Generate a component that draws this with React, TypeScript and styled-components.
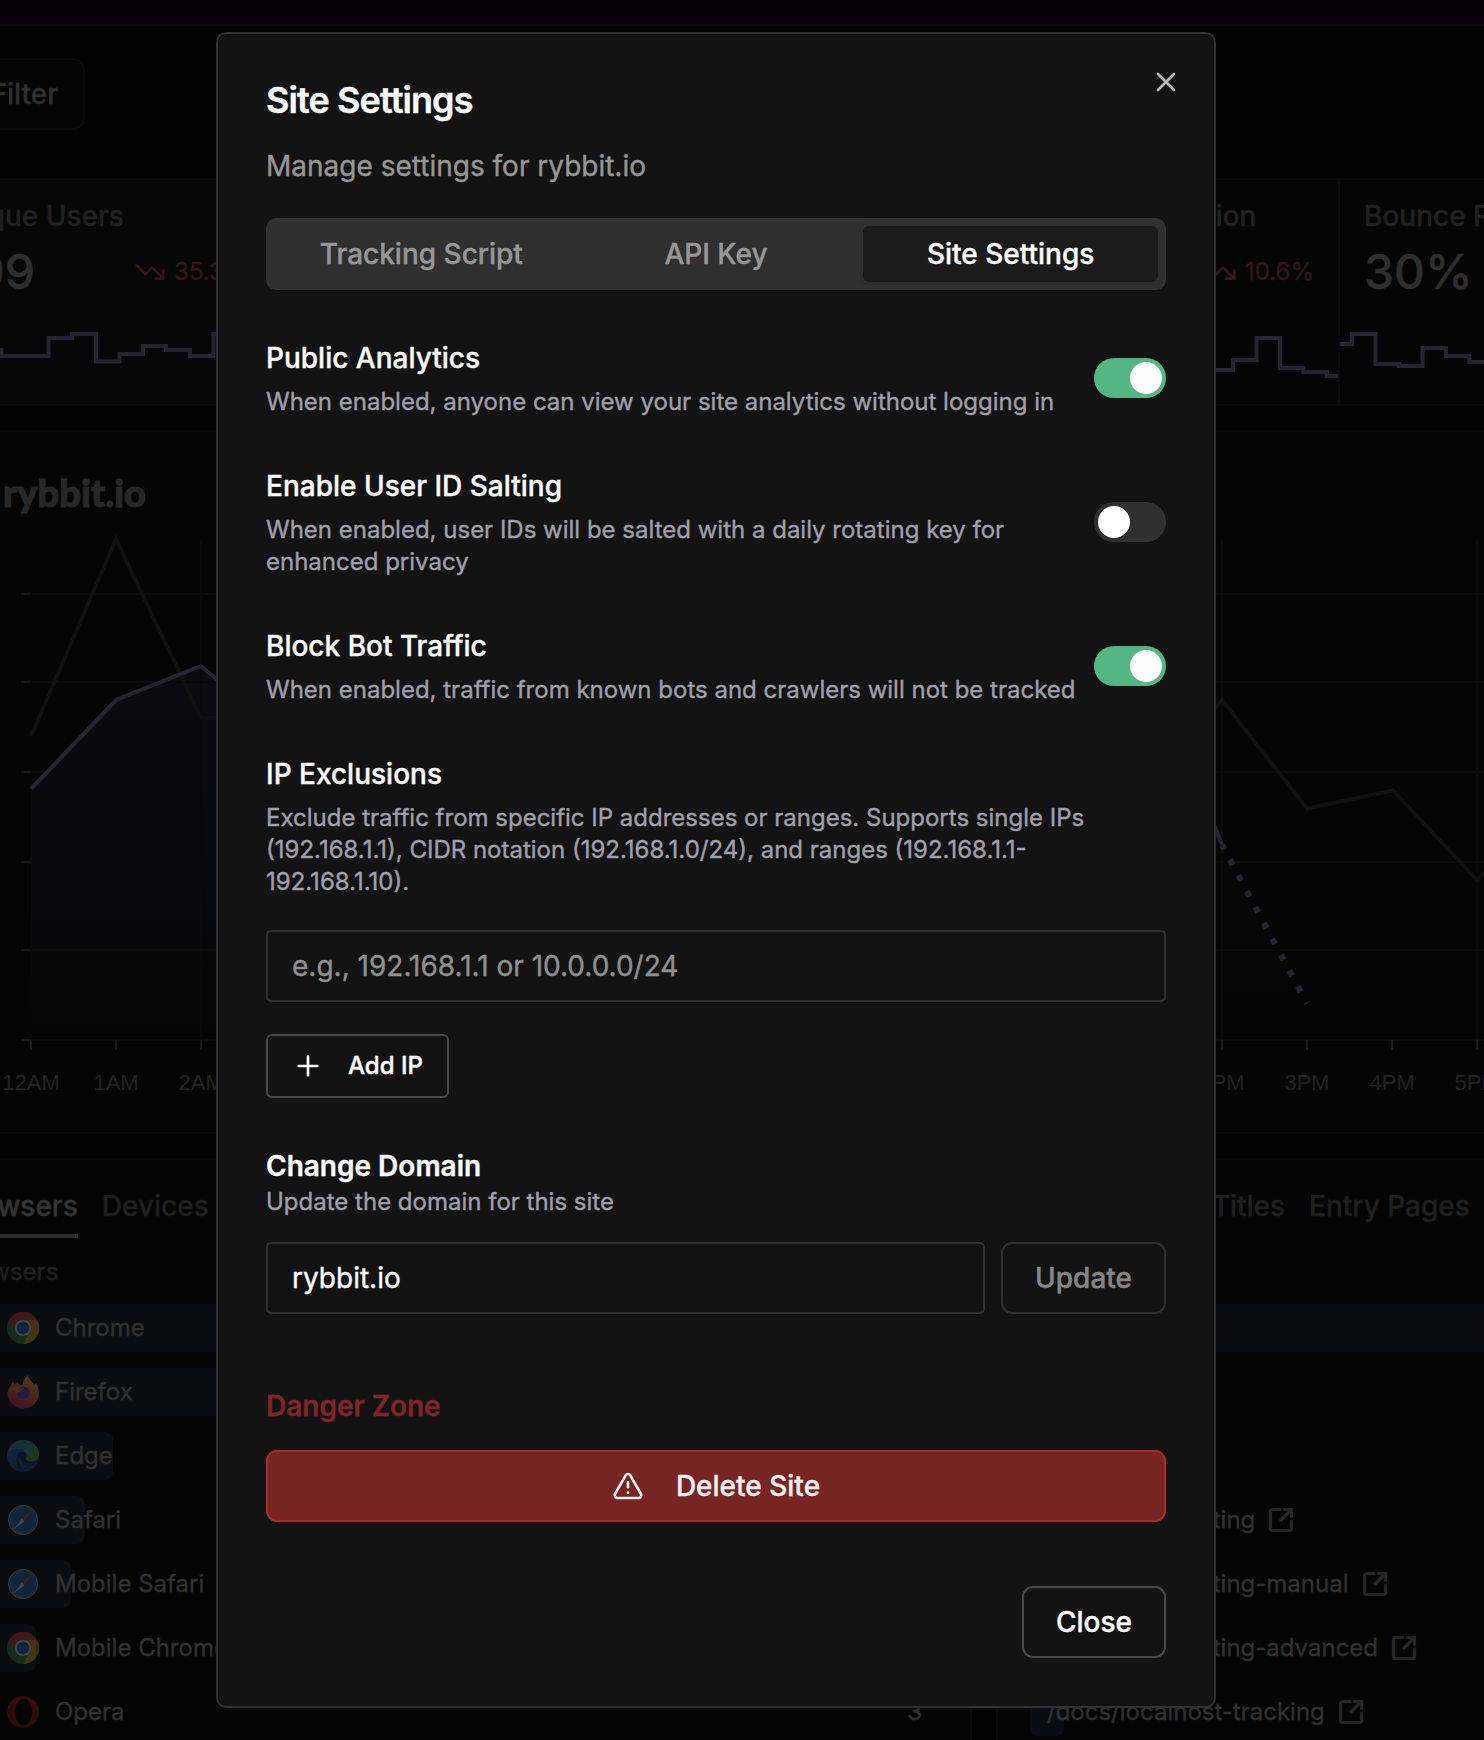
import React, { useState } from "react";
import styled, { createGlobalStyle, css } from "styled-components";
import { AlertTriangle, Plus, SquareArrowOutUpRight, TrendingDown, X } from "lucide-react";

const GlobalStyle = createGlobalStyle`
  *, *::before, *::after { box-sizing: border-box; }
  body {
    margin: 0;
    background: #020202;
    font-family: Inter, "Liberation Sans", sans-serif;
    -webkit-font-smoothing: antialiased;
    -webkit-text-stroke: 0.4px;
  }
  h1, h2, h3, h4, p { margin: 0; }
  button, input { font: inherit; }
`;

/* ---------- dashboard behind the dialog ---------- */

const Page = styled.div`
  position: relative;
  height: 1740px;
  overflow: hidden;
`;

const Dashboard = styled.main`
  display: flex;
  flex-direction: column;
`;

const NavStrip = styled.div`
  height: 26px;
  flex: none;
  background: #040208;
  border-bottom: 2px solid #0c0a10;
`;

const Toolbar = styled.div`
  display: flex;
  padding: 32px 0 48px;
`;

const FilterButton = styled.div`
  display: flex;
  align-items: center;
  justify-content: flex-end;
  width: 85px;
  height: 72px;
  padding-right: 25px;
  border: 2px solid #0a0a0a;
  border-left: 0;
  border-radius: 0 12px 12px 0;
  background: #040404;
  color: #303030;
  font-size: 28px;
  font-weight: 500;
  overflow: hidden;
`;

const FilterLabel = styled.span`
  flex: none;
`;

const Sections = styled.div`
  display: flex;
  flex-direction: column;
  gap: 24px;
  width: 2132px;
  margin-left: -82px;
`;

const Panel = styled.section`
  background: #040404;
  border: 2px solid #080808;
  border-radius: 16px;
`;

const StatsPanel = styled(Panel)`
  display: grid;
  grid-template-columns: repeat(6, 355.5px);
  height: 228px;
  border-left: 0;
  overflow: hidden;
`;

const StatCell = styled.div<{ $column: number; $active?: boolean }>`
  grid-column: ${(p) => p.$column};
  display: flex;
  flex-direction: column;
  padding-top: 16px;
  border-right: 2px solid #0a0a0a;
  background: ${(p) => (p.$active ? "#060606" : "transparent")};
`;

const StatLabel = styled.div<{ $indent?: number }>`
  padding: 0 24px 0 ${(p) => p.$indent ?? 24}px;
  font-size: 28px;
  line-height: 40px;
  font-weight: 500;
  color: #202020;
  white-space: nowrap;
`;

const StatRow = styled.div<{ $indent?: number }>`
  display: flex;
  align-items: center;
  justify-content: space-between;
  height: 72px;
  padding: 0 24px 0 ${(p) => p.$indent ?? 24}px;
`;

const StatValue = styled.div`
  padding-bottom: 2px;
  font-size: 48px;
  font-weight: 500;
  color: #2e2e2e;
`;

const StatChange = styled.div`
  display: flex;
  align-items: center;
  gap: 8px;
  margin-left: auto;
  font-size: 24px;
  color: #331616;
`;

const StatPercent = styled.span`
  padding-bottom: 2px;
`;

const Spark = styled.svg`
  display: block;
  width: 353.5px;
  height: 96px;
`;

const ChartPanel = styled(Panel)`
  height: 704px;
  padding-left: 80px;
`;

const ChartTitle = styled.div`
  height: 100px;
  padding: 38px 0 0 3px;
  font-family: Lato, Inter, sans-serif;
  font-size: 38px;
  line-height: 44px;
  font-weight: 900;
  color: #272727;
  -webkit-text-stroke: 1px;
`;

const ChartSvg = styled.svg`
  display: block;
  width: 1484px;
  height: 600px;
`;

const Lists = styled.div`
  display: grid;
  grid-template-columns: 1fr 1fr;
  gap: 24px;
`;

const ListPanel = styled(Panel)`
  height: 700px;
  padding: 26px 32px;
`;

const ListTabs = styled.div`
  display: flex;
  gap: 24px;
  height: 52px;
`;

const ListTab = styled.div<{ $active?: boolean }>`
  height: 52px;
  font-size: 28px;
  line-height: 40px;
  font-weight: 500;
  color: ${(p) => (p.$active ? "#333333" : "#1f1f1f")};
  border-bottom: ${(p) => (p.$active ? "4px solid #2d2d2d" : "0")};
  white-space: nowrap;
`;

const ListHeader = styled.div`
  height: 32px;
  margin: 18px 0 16px;
  font-size: 24px;
  line-height: 32px;
  color: #202020;
`;

const Rows = styled.div`
  display: flex;
  flex-direction: column;
  gap: 16px;
`;

const Row = styled.div<{ $inset: number }>`
  position: relative;
  display: flex;
  align-items: center;
  gap: 16px;
  height: 48px;
  padding: 0 16px 0 ${(p) => p.$inset}px;
  font-size: 24px;
  color: #303030;
`;

const Bar = styled.div`
  position: absolute;
  inset: 0 auto 0 0;
  border-radius: 8px;
  background: #0c0d11;
`;

const RowIcon = styled.svg`
  position: relative;
  width: 32px;
  height: 32px;
  flex: none;
  opacity: 0.25;
`;

const RowText = styled.span`
  position: relative;
  padding-bottom: 2px;
`;

const RowCount = styled.span`
  margin-left: auto;
  padding-bottom: 2px;
`;

const LinkIcon = styled(SquareArrowOutUpRight)`
  margin-left: -4px;
  color: #262626;
`;

/* ---------- dialog ---------- */

const Dialog = styled.div`
  position: absolute;
  top: 32px;
  left: 216px;
  width: 1000px;
  height: 1676px;
  display: flex;
  flex-direction: column;
  padding: 48px;
  border: 2px solid #303030;
  border-radius: 10px;
  background: #131313;
  color: #fafafa;
`;

const CloseIcon = styled.button`
  position: absolute;
  top: 32px;
  right: 32px;
  display: flex;
  padding: 0;
  border: 0;
  background: none;
  color: #b5b5b5;
`;

const Title = styled.h2`
  font-size: 36px;
  line-height: 36px;
  font-weight: 600;
  letter-spacing: -0.025em;
`;

const Subtitle = styled.p`
  margin-top: 28px;
  font-size: 28px;
  line-height: 40px;
  color: #969696;
`;

const Tabs = styled.div`
  display: grid;
  grid-template-columns: repeat(3, 1fr);
  margin-top: 32px;
  padding: 8px;
  height: 72px;
  border-radius: 10px;
  background: #303030;
`;

const Tab = styled.button<{ $active: boolean }>`
  border: 0;
  padding: 0;
  border-radius: 6px;
  background: transparent;
  color: #969696;
  font-size: 28px;
  font-weight: 500;
  line-height: 40px;
  ${(p) =>
    p.$active &&
    css`
      background: #1b1b1b;
      color: #fafafa;
      box-shadow: 0 2px 6px rgba(0, 0, 0, 0.12);
    `}
`;

const Settings = styled.div`
  display: flex;
  flex-direction: column;
  gap: 48px;
  margin-top: 48px;
`;

const SettingRow = styled.div`
  display: flex;
  align-items: center;
  justify-content: space-between;
`;

const SettingText = styled.div`
  display: flex;
  flex-direction: column;
  gap: 8px;
`;

const Label = styled.h4<{ $weight?: number }>`
  font-size: 28px;
  line-height: 40px;
  font-weight: ${(p) => p.$weight ?? 500};
`;

const Hint = styled.p`
  font-size: 24px;
  line-height: 32px;
  color: #9f9fa9;
`;

const Switch = styled.button<{ $on: boolean }>`
  display: flex;
  flex: none;
  justify-content: ${(p) => (p.$on ? "flex-end" : "flex-start")};
  width: 72px;
  height: 40px;
  padding: 4px;
  border: 0;
  border-radius: 20px;
  background: ${(p) => (p.$on ? "#55b685" : "#303030")};
`;

const Thumb = styled.span`
  width: 32px;
  height: 32px;
  border-radius: 50%;
  background: #ffffff;
`;

const Input = styled.input`
  width: 100%;
  min-width: 0;
  height: 72px;
  padding: 0 24px;
  border: 2px solid #303030;
  border-radius: 5px;
  background: transparent;
  color: #fafafa;
  font-size: 28px;
  outline: none;
  &::placeholder {
    color: #8f8f8f;
    opacity: 1;
  }
`;

const IpSection = styled.div`
  display: flex;
  flex-direction: column;
  align-items: flex-start;
`;

const IpInput = styled(Input)`
  margin: 32px 0;
`;

const Button = styled.button<{ $dim?: boolean }>`
  display: flex;
  align-items: center;
  justify-content: center;
  flex: none;
  height: 72px;
  padding: 0 32px;
  border: 2px solid #484848;
  border-radius: 11px;
  background: transparent;
  color: #fafafa;
  font-size: 28px;
  line-height: 40px;
  font-weight: 500;
  ${(p) =>
    p.$dim &&
    css`
      border-color: #2e2e2e;
      color: #868686;
    `}
`;

const AddButton = styled(Button)`
  gap: 24px;
  height: 64px;
  padding: 0 24px;
  border-radius: 6px;
  font-size: 24px;
`;

const DomainRow = styled.div`
  display: flex;
  gap: 16px;
  margin-top: 24px;
`;

const Danger = styled.div`
  display: flex;
  flex-direction: column;
  gap: 24px;
  margin-top: 24px;
`;

const DangerLabel = styled(Label)`
  color: #7f2525;
`;

const DeleteButton = styled(Button)`
  gap: 32px;
  border-color: #aa2c26;
  background: #762522;
  color: #f0f0f0;
`;

const Footer = styled.div`
  display: flex;
  justify-content: flex-end;
  margin-top: 64px;
`;

/* ---------- drawings ---------- */

type Browser = "chrome" | "firefox" | "edge" | "safari" | "opera";

function BrowserIcon({ kind }: { kind: Browser }) {
  if (kind === "chrome") {
    return (
      <RowIcon viewBox="0 0 32 32">
        <circle cx="16" cy="16" r="16" fill="#2a8a42" />
        <path d="M16 16 L2.14 8 A16 16 0 0 1 29.86 8 Z" fill="#cc3a2e" />
        <path d="M2.14 8 L9.1 20 L16 16 L16 8 Z" fill="#cc3a2e" />
        <path d="M16 8 H29.86 A16 16 0 0 1 16 32 L22.9 20 Z" fill="#dba816" />
        <circle cx="16" cy="16" r="8" fill="#f4f4f4" />
        <circle cx="16" cy="16" r="6.4" fill="#2c6fe0" />
      </RowIcon>
    );
  }
  if (kind === "firefox") {
    return (
      <RowIcon viewBox="0 0 32 32" overflow="visible">
        <defs>
          <linearGradient id="ffBody" x1="0.75" y1="0.05" x2="0.3" y2="1">
            <stop offset="0" stopColor="#ffd83e" />
            <stop offset="0.45" stopColor="#f47a20" />
            <stop offset="1" stopColor="#d9205a" />
          </linearGradient>
        </defs>
        <path
          d="M3.5 10 C4 8 5 6.5 6.5 5 C6.5 6.5 7 7.5 8 8.5 L11 5.5 C11 7.5 12 9 14.5 9.5 C16 9 15.5 6 17 4 C18 2 19.5 1 20.5 -1 C21.5 3 25 5 27 9 L29 7 C33 14 33 22 28 27.5 C21 34.5 9 34 3.5 26 C-0.5 20 -0.5 15 3.5 10 Z"
          fill="url(#ffBody)"
        />
        <circle cx="16.3" cy="17" r="6.4" fill="#7a3ce0" />
        <path d="M5 12 C9 9 12 13 17 13 C15 15 12 15 11 17 C9 16 7 15 5 12 Z" fill="#f48b26" />
      </RowIcon>
    );
  }
  if (kind === "edge") {
    return (
      <RowIcon viewBox="0 0 32 32">
        <defs>
          <linearGradient id="edgeTop" x1="0" y1="0.3" x2="1" y2="0.6">
            <stop offset="0" stopColor="#2688bd" />
            <stop offset="0.6" stopColor="#35a095" />
            <stop offset="1" stopColor="#55b54a" />
          </linearGradient>
          <linearGradient id="edgeLow" x1="0" y1="0" x2="1" y2="1">
            <stop offset="0" stopColor="#1f72b8" />
            <stop offset="1" stopColor="#0e4590" />
          </linearGradient>
        </defs>
        <circle cx="16" cy="16" r="16" fill="url(#edgeLow)" />
        <path
          d="M0.5 14 C2 5 9 0 16 0 C26 0 32 7 32 14 C32 19 28 21.5 24 21.5 C20 21.5 18.5 20 19 18.5 C20 16 19.5 9 11 8.5 C6 8.5 2 11 0.5 14 Z"
          fill="url(#edgeTop)"
        />
        <path
          d="M9.5 17 C10 12.5 14 11.5 17.5 12 C21 14.5 19 17.5 19 19 C20 22 25 23 30.5 20.5 C31 23 25 27 20 26 C15 25 12.5 19 14 15 C11 18 11 27 18.5 31.7 C12 31 9 24 9.5 17 Z"
          fill="#0a3064"
        />
      </RowIcon>
    );
  }
  if (kind === "safari") {
    return (
      <RowIcon viewBox="0 0 32 32">
        <circle cx="16" cy="16" r="14.6" fill="#1c6cb0" stroke="#b8c0c8" strokeWidth="0.9" />
        <circle
          cx="16"
          cy="16"
          r="12.4"
          fill="none"
          stroke="#8cb8da"
          strokeWidth="1.4"
          strokeDasharray="0.5 1.45"
        />
        <path d="M25.5 6.5 L14.7 14.5 L17.3 17.5 Z" fill="#e8432f" />
        <path d="M6.5 25.5 L14.7 14.5 L17.3 17.5 Z" fill="#d9dde0" />
      </RowIcon>
    );
  }
  return (
    <RowIcon viewBox="0 0 32 32">
      <defs>
        <linearGradient id="operaRing" x1="0" y1="0" x2="0" y2="1">
          <stop offset="0" stopColor="#c22a2a" />
          <stop offset="1" stopColor="#9a2020" />
        </linearGradient>
      </defs>
      <path
        fillRule="evenodd"
        fill="url(#operaRing)"
        d="M16 0 A16 16 0 1 1 16 32 A16 16 0 1 1 16 0 Z M16.5 3 C11.5 3 8 9 8 16 C8 23 11.5 29 16.5 29 C21.5 29 25 23 25 16 C25 9 21.5 3 16.5 3 Z"
      />
    </RowIcon>
  );
}

function Sparkline({ left, points }: { left: number; points: string }) {
  return (
    <Spark viewBox={`${left} 308 353.5 96`}>
      <polyline points={points} fill="none" stroke="#242531" strokeWidth="4" />
    </Spark>
  );
}

const hourX = (h: number) => 31 + h * 85.07;
const gridY = [594, 682, 772, 862, 950, 1040];
const hours: [number, string][] = [
  [0, "12AM"],
  [1, "1AM"],
  [2, "2AM"],
  [14, "2PM"],
  [15, "3PM"],
  [16, "4PM"],
  [17, "5PM"],
];

function VisitorsChart() {
  return (
    <ChartSvg viewBox="0 532 1484 600">
      <defs>
        <linearGradient id="area" gradientUnits="userSpaceOnUse" x1="0" y1="660" x2="0" y2="1040">
          <stop offset="0" stopColor="#0c0c11" />
          <stop offset="0.5" stopColor="#090a0c" />
          <stop offset="1" stopColor="#040404" />
        </linearGradient>
      </defs>
      <path d="M31 789 L116 700 L201 666 L216 679 V1040 H31 Z" fill="url(#area)" />
      <path d="M1216 829 L1222 846 L1307 1003 V1040 H1216 Z" fill="url(#area)" opacity="0.4" />
      {gridY.map((y) => (
        <g key={y}>
          <line x1="31" x2="1484" y1={y} y2={y} stroke="#0a0a0b" strokeWidth="2" />
          <line x1="21" x2="31" y1={y} y2={y} stroke="#161616" strokeWidth="2" />
        </g>
      ))}
      {[2, 14, 17].map((h) => (
        <line key={h} x1={hourX(h)} x2={hourX(h)} y1="540" y2="1040" stroke="#0a0a0b" strokeWidth="2" />
      ))}
      <g fill="none" stroke="#101011" strokeWidth="4">
        <polyline points="31,736 116,539 201,718 222,718" />
        <polyline points="1210,714 1222,700 1307,808.5 1393,790.5 1477,880 1490,867" />
      </g>
      <g fill="none" stroke="#242531" strokeWidth="4">
        <polyline points="31,789 116,700 201,666 222,684" />
        <polyline points="1212,820 1222,845" />
        <line x1="1222" y1="845" x2="1307" y2="1003.5" strokeWidth="6" strokeDasharray="6 12" strokeDashoffset="1.5" />
      </g>
      {hours.map(([h, text]) => (
        <g key={h}>
          <line x1={hourX(h)} x2={hourX(h)} y1="1040" y2="1050" stroke="#1b1b1b" strokeWidth="2" />
          <text
            x={hourX(h)}
            y="1090"
            textAnchor="middle"
            fontFamily="'Liberation Sans', Arial, sans-serif"
            fontSize="22"
            fill="#212121"
          >
            {text}
          </text>
        </g>
      ))}
    </ChartSvg>
  );
}

/* ---------- data ---------- */

const browsers: { name: string; icon: Browser; bar: number; count?: string }[] = [
  { name: "Chrome", icon: "chrome", bar: 984 },
  { name: "Firefox", icon: "firefox", bar: 420 },
  { name: "Edge", icon: "edge", bar: 161 },
  { name: "Safari", icon: "safari", bar: 133 },
  { name: "Mobile Safari", icon: "safari", bar: 119 },
  { name: "Mobile Chrome", icon: "chrome", bar: 84 },
  { name: "Opera", icon: "opera", bar: 0, count: "3" },
];

const pages: { path: string; bar: number }[] = [
  { path: "", bar: 984 },
  { path: "", bar: 150 },
  { path: "", bar: 90 },
  { path: "/docs/self-hosting", bar: 60 },
  { path: "/docs/self-hosting-manual", bar: 50 },
  { path: "/docs/self-hosting-advanced", bar: 40 },
  { path: "/docs/localhost-tracking", bar: 34 },
];

const toggles = [
  {
    label: "Public Analytics",
    hint: "When enabled, anyone can view your site analytics without logging in",
    on: true,
  },
  {
    label: "Enable User ID Salting",
    hint: "When enabled, user IDs will be salted with a daily rotating key for enhanced privacy",
    on: false,
  },
  {
    label: "Block Bot Traffic",
    hint: "When enabled, traffic from known bots and crawlers will not be tracked",
    on: true,
  },
];

const tabNames = ["Tracking Script", "API Key", "Site Settings"];

function SettingsDialog() {
  const [tab, setTab] = useState(2);
  const [states, setStates] = useState(toggles.map((t) => t.on));
  const flip = (i: number) => setStates(states.map((s, j) => (j === i ? !s : s)));

  return (
    <Dialog role="dialog">
      <CloseIcon aria-label="Close dialog">
        <X size={32} />
      </CloseIcon>
      <Title>Site Settings</Title>
      <Subtitle>Manage settings for rybbit.io</Subtitle>
      <Tabs>
        {tabNames.map((name, i) => (
          <Tab key={name} $active={i === tab} onClick={() => setTab(i)}>
            {name}
          </Tab>
        ))}
      </Tabs>
      <Settings>
        {toggles.map((t, i) => (
          <SettingRow key={t.label}>
            <SettingText>
              <Label>{t.label}</Label>
              <Hint>{t.hint}</Hint>
            </SettingText>
            <Switch $on={states[i]} onClick={() => flip(i)}>
              <Thumb />
            </Switch>
          </SettingRow>
        ))}
        <IpSection>
          <SettingText>
            <Label>IP Exclusions</Label>
            <Hint>
              Exclude traffic from specific IP addresses or ranges. Supports single IPs (192.168.1.1), CIDR
              notation (192.168.1.0/24), and ranges (192.168.1.1-192.168.1.10).
            </Hint>
          </SettingText>
          <IpInput placeholder="e.g., 192.168.1.1 or 10.0.0.0/24" />
          <AddButton>
            <Plus size={32} />
            Add IP
          </AddButton>
        </IpSection>
        <div>
          <Label $weight={600}>Change Domain</Label>
          <Hint>Update the domain for this site</Hint>
          <DomainRow>
            <Input defaultValue="rybbit.io" />
            <Button $dim>Update</Button>
          </DomainRow>
        </div>
        <Danger>
          <DangerLabel $weight={600}>Danger Zone</DangerLabel>
          <DeleteButton>
            <AlertTriangle size={32} />
            Delete Site
          </DeleteButton>
        </Danger>
      </Settings>
      <Footer>
        <Button>Close</Button>
      </Footer>
    </Dialog>
  );
}

export default function App() {
  return (
    <Page>
      <GlobalStyle />
      <Dashboard>
        <NavStrip />
        <Toolbar>
          <FilterButton>
            <FilterLabel>Filter</FilterLabel>
          </FilterButton>
        </Toolbar>
        <Sections>
          <StatsPanel>
            <StatCell $column={1} $active>
              <StatLabel $indent={25}>Unique Users</StatLabel>
              <StatRow $indent={27}>
                <StatValue>299</StatValue>
                <StatChange>
                  <TrendingDown size={32} />
                  <StatPercent>35.3%</StatPercent>
                </StatChange>
              </StatRow>
              <Sparkline
                left={-82}
                points="-20,350 1.5,350 1.5,356 48.5,356 48.5,338 72,338 72,334 96,334 96,361.5 119.5,361.5 119.5,354 143,354 143,346 166,346 166,350 190,350 190,356 213.5,356 213.5,334 230,334"
              />
            </StatCell>
            <StatCell $column={4}>
              <StatLabel $indent={45}>Session Duration</StatLabel>
              <StatRow>
                <StatChange>
                  <TrendingDown size={32} />
                  <StatPercent>10.6%</StatPercent>
                </StatChange>
              </StatRow>
              <Sparkline
                left={984.5}
                points="1200,370 1232.5,370 1232.5,360 1256,360 1256,338 1279.5,338 1279.5,368 1303,368 1303,372 1326.5,372 1326.5,376 1338,376"
              />
            </StatCell>
            <StatCell $column={5}>
              <StatLabel>Bounce Rate</StatLabel>
              <StatRow>
                <StatValue>30%</StatValue>
              </StatRow>
              <Sparkline
                left={1340}
                points="1340,344 1352,344 1352,334 1375.5,334 1375.5,364 1399,364 1399,366 1422.5,366 1422.5,348 1446,348 1446,356 1469.5,356 1469.5,362 1500,362"
              />
            </StatCell>
          </StatsPanel>
          <ChartPanel>
            <ChartTitle>rybbit.io</ChartTitle>
            <VisitorsChart />
          </ChartPanel>
          <Lists>
            <ListPanel>
              <ListTabs>
                <ListTab $active>Browsers</ListTab>
                <ListTab>Devices</ListTab>
              </ListTabs>
              <ListHeader>Browsers</ListHeader>
              <Rows>
                {browsers.map((b) => (
                  <Row key={b.name} $inset={55}>
                    <Bar style={{ width: b.bar }} />
                    <BrowserIcon kind={b.icon} />
                    <RowText>{b.name}</RowText>
                    {b.count && <RowCount>{b.count}</RowCount>}
                  </Row>
                ))}
              </Rows>
            </ListPanel>
            <ListPanel>
              <ListTabs>
                <ListTab>Pages</ListTab>
                <ListTab>Page Titles</ListTab>
                <ListTab>Entry Pages</ListTab>
              </ListTabs>
              <ListHeader />
              <Rows>
                {pages.map((p, i) => (
                  <Row key={i} $inset={17}>
                    <Bar style={{ width: p.bar }} />
                    {p.path && (
                      <>
                        <RowText>{p.path}</RowText>
                        <LinkIcon size={28} strokeWidth={2.75} />
                      </>
                    )}
                  </Row>
                ))}
              </Rows>
            </ListPanel>
          </Lists>
        </Sections>
      </Dashboard>
      <SettingsDialog />
    </Page>
  );
}
